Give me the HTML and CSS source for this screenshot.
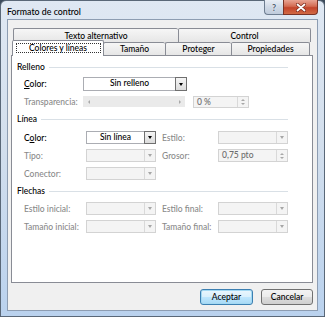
FILE: index.html
```html
<!DOCTYPE html>
<html lang="es">
<head>
<meta charset="utf-8">
<title>Formato de control</title>
<link rel="stylesheet" href="styles.css">
</head>
<body>
<div class="window">
  <div class="titlebar">
    <span class="title">Formato de control</span>
    <div class="caption-btns">
      <div class="cbtn help">?</div>
      <div class="cbtn close">
        <svg width="10" height="9" viewBox="0 0 10 9">
          <path d="M1.5 1.5 L8.5 7.5 M8.5 1.5 L1.5 7.5" stroke="#7a2a1c" stroke-width="3.2" stroke-linecap="round" fill="none"/>
          <path d="M1.5 1.5 L8.5 7.5 M8.5 1.5 L1.5 7.5" stroke="#ffffff" stroke-width="1.8" stroke-linecap="round" fill="none"/>
        </svg>
      </div>
    </div>
  </div>
  <div class="client">
    <div class="tabs">
      <div class="tabrow back">
        <div class="tab">Texto alternativo</div>
        <div class="tab last">Control</div>
      </div>
      <div class="tabrow front">
        <div class="tab selected"><span class="focus">Colores y líneas</span></div>
        <div class="tab">Tamaño</div>
        <div class="tab">Proteger</div>
        <div class="tab last">Propiedades</div>
      </div>
    </div>
    <div class="panel">
      <div class="group-head g-relleno"><span>Relleno</span><i class="rule"></i></div>
      <div class="row-r r-color">
        <span class="lbl"><u>C</u>olor:</span>
        <div class="combo on tall"><span class="val">Sin relleno</span><span class="drop on"><i class="tri"></i></span></div>
      </div>
      <div class="row-r r-transp">
        <span class="lbl dis">Transparencia:</span>
        <div class="slider"><span class="sarrow"><i class="tri-l"></i></span><span class="strack"></span><span class="sarrow"><i class="tri-r"></i></span></div>
        <div class="spin"><span class="sval">0 %</span><span class="sbtns"><i class="tri-u"></i><i class="tri-d"></i></span></div>
      </div>

      <div class="group-head g-linea"><span>Línea</span><i class="rule"></i></div>
      <div class="row-l r-lcolor">
        <span class="lbl">C<u>o</u>lor:</span>
        <div class="combo on"><span class="val">Sin línea</span><span class="drop on"><i class="tri"></i></span></div>
        <span class="lbl dis second">Estilo:</span>
        <div class="combo"><span class="val"></span><span class="drop"><i class="tri"></i></span></div>
      </div>
      <div class="row-l r-tipo">
        <span class="lbl dis">Tipo:</span>
        <div class="combo"><span class="val"></span><span class="drop"><i class="tri"></i></span></div>
        <span class="lbl dis second">Grosor:</span>
        <div class="spin"><span class="sval">0,75 pto</span><span class="sbtns"><i class="tri-u"></i><i class="tri-d"></i></span></div>
      </div>
      <div class="row-l r-conector">
        <span class="lbl dis">Conector:</span>
        <div class="combo"><span class="val"></span><span class="drop"><i class="tri"></i></span></div>
      </div>

      <div class="group-head g-flechas"><span>Flechas</span><i class="rule"></i></div>
      <div class="row-l r-estilo">
        <span class="lbl dis">Estilo inicial:</span>
        <div class="combo"><span class="val"></span><span class="drop"><i class="tri"></i></span></div>
        <span class="lbl dis second">Estilo final:</span>
        <div class="combo"><span class="val"></span><span class="drop"><i class="tri"></i></span></div>
      </div>
      <div class="row-l r-tamano">
        <span class="lbl dis">Tamaño inicial:</span>
        <div class="combo"><span class="val"></span><span class="drop"><i class="tri"></i></span></div>
        <span class="lbl dis second">Tamaño final:</span>
        <div class="combo"><span class="val"></span><span class="drop"><i class="tri"></i></span></div>
      </div>
    </div>
    <div class="buttons">
      <div class="btn default">Aceptar</div>
      <div class="btn">Cancelar</div>
    </div>
  </div>
</div>
</body>
</html>
```
FILE: styles.css
```css
* { box-sizing: border-box; }
html, body { margin: 0; padding: 0; }
body {
  width: 325px;
  height: 317px;
  overflow: hidden;
  background: #3c4b5c;
  font-family: Lato, "Noto Sans", "DejaVu Sans", sans-serif;
  font-size: 8.5px;
  font-weight: 500;
  color: #000;
}
i { display: block; }

.window {
  width: 325px;
  height: 317px;
  border: 1px solid #5a6878;
  border-radius: 6px 6px 0 0;
  background: linear-gradient(#dfe8f3, #d3dfed 45%, #bad2ee);
  padding: 0 6px 5px 6px;
  display: flex;
  flex-direction: column;
}

.titlebar {
  height: 18px;
  display: flex;
  align-items: flex-start;
}
.title {
  padding-top: 6px;
  line-height: 10px;
  font-size: 8.8px;
  color: #000;
}
.caption-btns {
  margin-left: auto;
  margin-top: -1px;
  display: flex;
}
.cbtn {
  height: 15px;
  display: flex;
  align-items: center;
  justify-content: center;
  border: 1px solid #6d7d90;
  border-top: none;
}
.help {
  width: 19px;
  border-right: none;
  border-radius: 0 0 0 4px;
  background: linear-gradient(#e9eef5, #cfd9e6 50%, #bfcbdb);
  font-weight: 700;
  font-size: 9px;
  color: #51606f;
  text-shadow: 0 0 2px #fff;
}
.close {
  width: 35px;
  border-radius: 0 0 4px 0;
  border-color: #7a3326;
  background: linear-gradient(#e8a493, #d36b52 45%, #c3432a 55%, #d16a45);
}

.client {
  flex: 1;
  background: #f0f0f0;
  border: 1px solid #8d9db2;
  padding: 8px 3px 0 3px;
  display: flex;
  flex-direction: column;
}

.tabrow { display: flex; }
.tab {
  border: 1px solid #898c95;
  border-right: none;
  border-bottom: none;
  background: linear-gradient(#f6f6f6, #e6e6e6);
  display: flex;
  align-items: center;
  justify-content: center;
  line-height: 10px;
  color: #000;
}
.tab.last { border-right: 1px solid #898c95; }
.back { padding-left: 2px; height: 14px; }
.back .tab { height: 14px; border-radius: 2px 2px 0 0; }
.back .tab:nth-child(1) { width: 165px; }
.back .tab:nth-child(2) { width: 133px; }
.front { height: 13px; padding-left: 1px; position: relative; z-index: 2; }
.front .tab { height: 13px; border-radius: 2px 2px 0 0; }
.front .tab:nth-child(1) { width: 92px; }
.front .tab:nth-child(2) { width: 62px; }
.front .tab:nth-child(3) { width: 66px; }
.front .tab:nth-child(4) { width: 79px; }
.tab.selected {
  height: 16px;
  margin-top: -2px;
  background: #fff;
  border-right: 1px solid #898c95;
  margin-right: -1px;
  position: relative;
  z-index: 3;
  align-items: flex-start;
  padding-top: 2px;
}
.focus {
  display: block;
  width: 85px;
  height: 10px;
  border: 1px dotted #333;
  text-align: center;
  line-height: 8px;
}

.panel {
  width: 302px;
  height: 228px;
  background: #fff;
  border: 1px solid #898c95;
  padding: 5px 24px 0 5px;
}

.group-head {
  height: 12px;
  display: flex;
  align-items: center;
  gap: 4px;
  color: #000;
}
.rule { flex: 1; height: 1px; background: #d9e0e6; }
.g-linea { margin-top: 5px; }
.g-flechas { margin-top: 5px; }

.lbl { align-self: center; line-height: 10px; white-space: nowrap; }
.lbl.dis { color: #8a8a8a; }
.lbl.second { padding-left: 6px; }

.row-r {
  display: grid;
  grid-template-columns: 59px 104px 62px;
  padding-left: 7px;
}
.row-r .spin { margin-left: 6px; }
.r-color { margin-top: 4px; height: 14px; }
.r-transp { margin-top: 5px; height: 12px; }

.row-l {
  display: grid;
  grid-template-columns: 62px 70px 62px 70px;
  padding-left: 7px;
  height: 13px;
}
.r-lcolor { margin-top: 6px; }
.r-tipo { margin-top: 5px; }
.r-conector { margin-top: 5px; }
.r-estilo { margin-top: 5px; }
.r-tamano { margin-top: 5px; }

.combo {
  display: flex;
  height: 13px;
  border: 1px solid #d3d3d3;
  background: #f4f4f4;
}
.combo.tall { height: 14px; }
.combo.on { border-color: #abadb3; background: #fff; }
.val { flex: 1; text-align: center; line-height: 11px; color: #000; }
.drop {
  width: 11px;
  border-left: 1px solid #d9d9d9;
  display: flex;
  align-items: center;
  justify-content: center;
}
.drop.on {
  width: 12px;
  margin: -1px -1px -1px 0;
  border: 1px solid #6f6f6f;
  background: linear-gradient(#f5f5f5, #dcdcdc);
}
.tri {
  width: 1px; height: 0;
  border-left: 2px solid transparent;
  border-right: 2px solid transparent;
  border-top: 3px solid #a6a6a6;
}
.drop.on .tri { border-top-color: #000; }

.slider {
  display: flex;
  height: 11px;
  width: 102px;
  background: #eaeaea;
}
.sarrow { width: 11px; display: flex; align-items: center; justify-content: center; }
.strack { flex: 1; }
.tri-l {
  width: 0; height: 1px;
  border-top: 2px solid transparent;
  border-bottom: 2px solid transparent;
  border-right: 2px solid #a8a8a8;
}
.tri-r {
  width: 0; height: 1px;
  border-top: 2px solid transparent;
  border-bottom: 2px solid transparent;
  border-left: 2px solid #a8a8a8;
}

.spin {
  display: flex;
  height: 13px;
  border: 1px solid #d3d3d3;
  background: #f4f4f4;
}
.r-transp .spin { height: 12px; }
.sval { flex: 1; padding-left: 3px; line-height: 11px; color: #6d6d6d; }
.sbtns {
  width: 11px;
  border-left: 1px solid #d9d9d9;
  display: flex;
  flex-direction: column;
  align-items: center;
  justify-content: center;
  gap: 2px;
}
.tri-u {
  width: 1px; height: 0;
  border-left: 2px solid transparent;
  border-right: 2px solid transparent;
  border-bottom: 2px solid #a8a8a8;
}
.tri-d {
  width: 1px; height: 0;
  border-left: 2px solid transparent;
  border-right: 2px solid transparent;
  border-top: 2px solid #a8a8a8;
}

.buttons {
  margin-top: 6px;
  display: flex;
  justify-content: flex-end;
  gap: 8px;
  padding-right: 1px;
}
.btn {
  width: 52px;
  height: 16px;
  border: 1px solid #707070;
  border-radius: 3px;
  background: linear-gradient(#f3f3f3, #ebebeb 50%, #dddddd 51%, #cfcfcf);
  display: flex;
  align-items: center;
  justify-content: center;
  line-height: 10px;
  color: #000;
}
.btn.default {
  width: 53px;
  border-color: #3c7fb1;
  box-shadow: inset 0 0 0 1px #a3d9f3;
  background: linear-gradient(#eaf6fd, #d9f0fc 50%, #bee6fd 51%, #a7d9f5);
}
```
